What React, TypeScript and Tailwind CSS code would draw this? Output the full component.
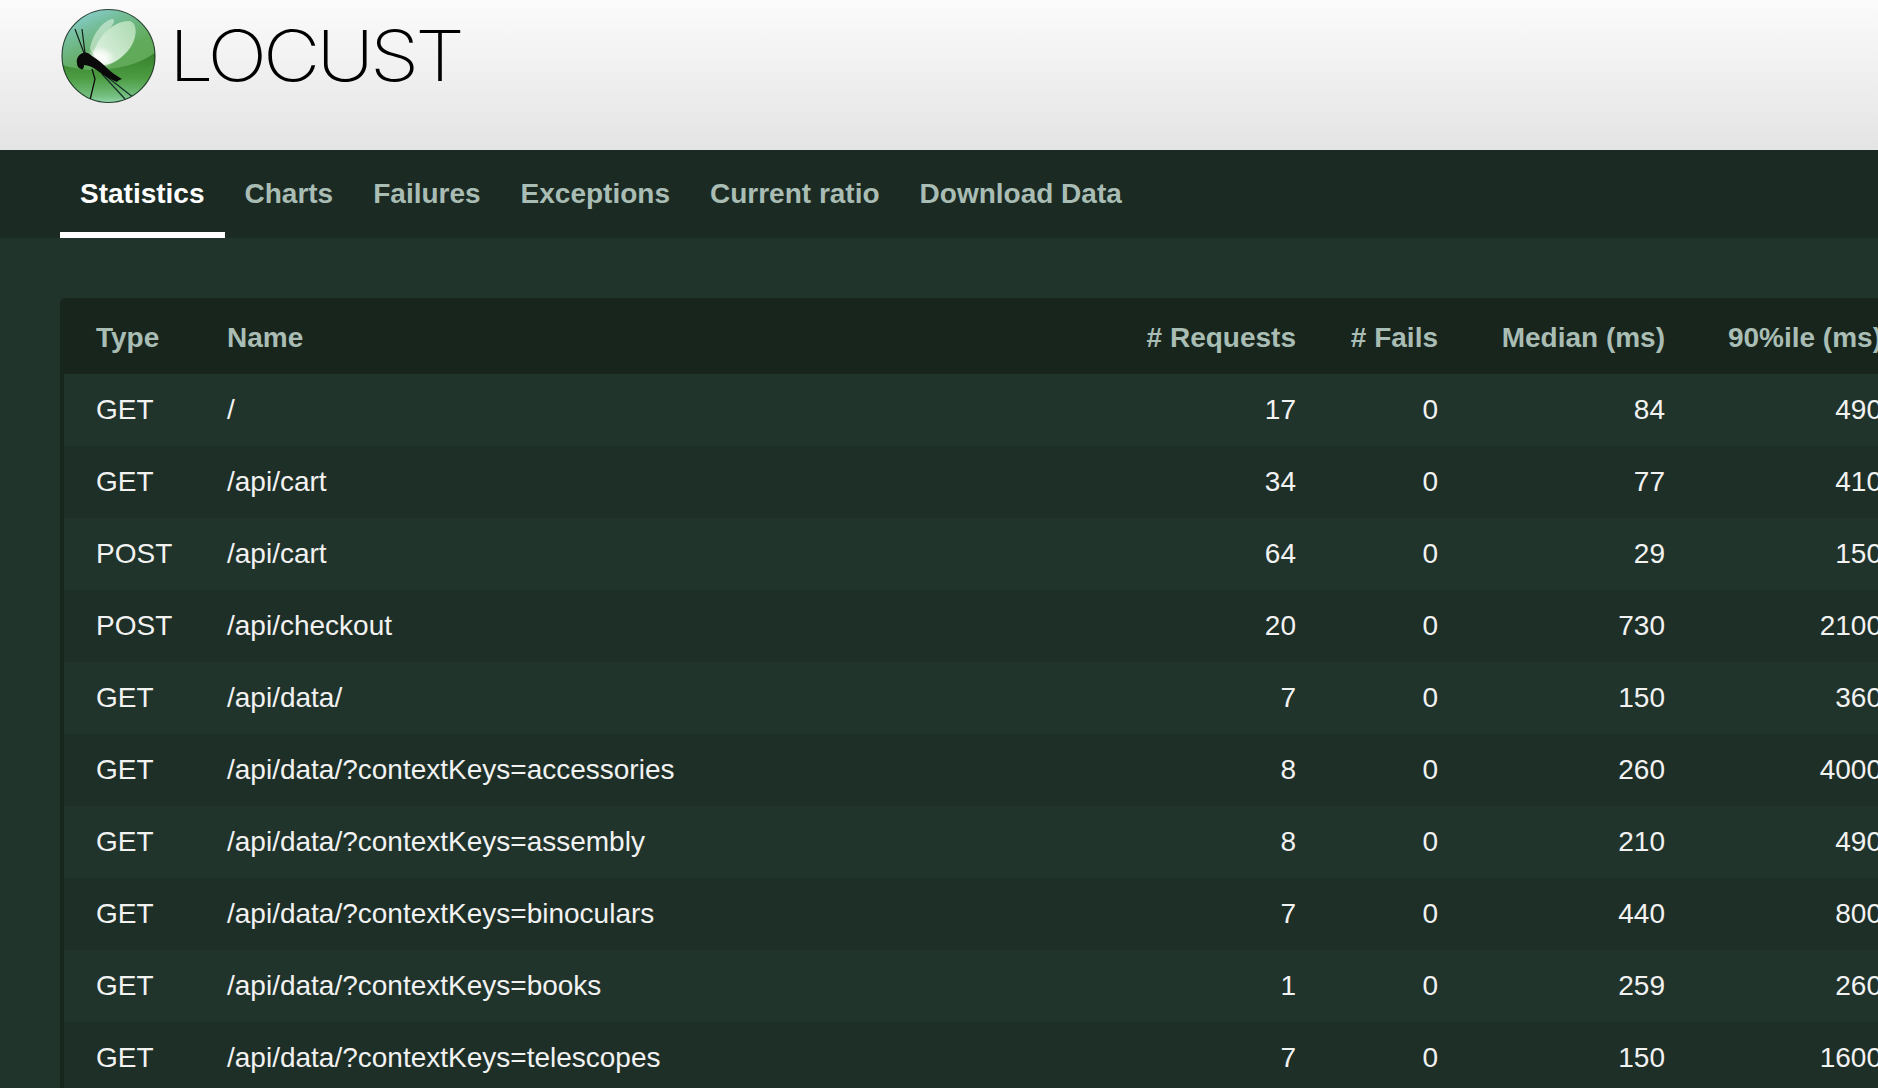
const tabs = ["Statistics", "Charts", "Failures", "Exceptions", "Current ratio", "Download Data"];
const rows: [string, string, string, string, string, string][] = [
  ["GET", "/", "17", "0", "84", "490"],
  ["GET", "/api/cart", "34", "0", "77", "410"],
  ["POST", "/api/cart", "64", "0", "29", "150"],
  ["POST", "/api/checkout", "20", "0", "730", "2100"],
  ["GET", "/api/data/", "7", "0", "150", "360"],
  ["GET", "/api/data/?contextKeys=accessories", "8", "0", "260", "4000"],
  ["GET", "/api/data/?contextKeys=assembly", "8", "0", "210", "490"],
  ["GET", "/api/data/?contextKeys=binoculars", "7", "0", "440", "800"],
  ["GET", "/api/data/?contextKeys=books", "1", "0", "259", "260"],
  ["GET", "/api/data/?contextKeys=telescopes", "7", "0", "150", "1600"],
];

function Logo() {
  return (
    <svg width="96" height="96" viewBox="0 0 96 96" className="shrink-0">
      <defs>
        <linearGradient id="top" x1="0.2" y1="0" x2="0.65" y2="1">
          <stop offset="0" stopColor="#8ccfd6" />
          <stop offset="0.22" stopColor="#74bd98" />
          <stop offset="0.5" stopColor="#62ab5e" />
          <stop offset="1" stopColor="#5aa64c" />
        </linearGradient>
        <linearGradient id="bot" x1="0" y1="0" x2="0" y2="1">
          <stop offset="0" stopColor="#357f2a" />
          <stop offset="0.5" stopColor="#4c9c42" />
          <stop offset="0.85" stopColor="#74bf80" />
          <stop offset="1" stopColor="#9adcb6" />
        </linearGradient>
        <linearGradient id="wing" x1="1" y1="0" x2="0" y2="1">
          <stop offset="0" stopColor="#b5e0b8" />
          <stop offset="0.7" stopColor="#e8f7ea" />
          <stop offset="1" stopColor="#ffffff" />
        </linearGradient>
        <radialGradient id="glow" cx="0.5" cy="0.5" r="0.5">
          <stop offset="0" stopColor="#ffffff" stopOpacity="1" />
          <stop offset="0.45" stopColor="#ffffff" stopOpacity="0.75" />
          <stop offset="1" stopColor="#ffffff" stopOpacity="0" />
        </radialGradient>
        <clipPath id="ball"><circle cx="48.5" cy="48" r="46.5" /></clipPath>
      </defs>
      <circle cx="48.5" cy="48" r="46.5" fill="url(#top)" />
      <g clipPath="url(#ball)">
        <path d="M0 56 C25 66 70 64 96 44 V96 H0 Z" fill="url(#bot)" />
        <path d="M33 46 C38 28 54 12 70 13 C78 16 77 30 70 40 C62 51 50 58 42 57 Z" fill="url(#wing)" opacity="0.85" />
        <path d="M30 41 C32 27 43 12 53 11 C57 13 50 20 43 28 C38 34 35 40 33 46 Z" fill="#dcf2e0" opacity="0.6" />
        <ellipse cx="40" cy="50" rx="15" ry="11" fill="url(#glow)" />
        <path d="M24 45 L15 21 M25 45 L22 21" stroke="#15201a" strokeWidth="1.2" fill="none" />
        <path d="M32 61 L35 71 L30 92" stroke="#0d0d0d" strokeWidth="1.3" fill="none" />
        <path d="M42 66 L65 91 M46 68 L74 90" stroke="#16302c" strokeWidth="1.2" fill="none" />
        <path d="M17 55 C16 50 19 46 24 44.5 C27 44 30 46 32 48 C37 51 42 55 47 60 C50 63 55 67 62 71 C60 72 58 72 57 74 C50 71 44 68 38 63 C33 59 28 57 24 57 C24 60 23 62 21 61 C18 60 17 58 17 55 Z" fill="#0a0a0a" />
      </g>
      <circle cx="48.5" cy="48" r="46.5" fill="none" stroke="#10281a" strokeOpacity="0.85" strokeWidth="1.1" />
    </svg>
  );
}

export default function App() {
  return (
    <div className="h-[1088px] w-full overflow-hidden bg-[#20342c] font-['Liberation_Sans',Arial,sans-serif] text-[28px]">
      <header className="flex h-[150px] items-start bg-gradient-to-b from-[#fbfbfb] to-[#e4e4e4] pl-[60px] pt-[8px]">
        <Logo />
        <span className="ml-[13px] mt-[6px] origin-left scale-x-[1.13] font-['Inter',sans-serif] text-[70px] font-[150] leading-[84px] tracking-[-3.5px] text-black">LOCUST</span>
      </header>
      <nav className="flex h-[88px] bg-[#1b2a23] pl-[60px]">
        {tabs.map((t, i) => (
          <div
            key={t}
            className={
              i === 0
                ? "flex h-full items-center border-b-[6px] border-white px-5 pt-[6px] font-bold text-white"
                : "flex h-full items-center px-5 pb-[6px] pt-[6px] font-bold text-[#a9bdb4]"
            }
          >
            {t}
          </div>
        ))}
      </nav>
      <main className="pl-[60px] pt-[60px]">
        <div className="w-[1900px] overflow-hidden rounded-[6px] border-l-[4px] border-[#17251d]">
          <table className="w-[1834px] table-fixed border-collapse">
            <thead>
              <tr className="h-[76px] bg-[#17251d] font-bold text-[#a9bdb4]">
                <th className="w-[147px] pl-8 pr-4 pt-[4px] text-left font-bold">Type</th>
                <th className="w-[909px] px-4 pt-[4px] text-left font-bold">Name</th>
                <th className="w-[192px] px-4 pt-[4px] text-right font-bold whitespace-nowrap"># Requests</th>
                <th className="w-[142px] px-4 pt-[4px] text-right font-bold whitespace-nowrap"># Fails</th>
                <th className="w-[227px] px-4 pt-[4px] text-right font-bold whitespace-nowrap">Median (ms)</th>
                <th className="w-[217px] px-4 pt-[4px] text-right font-bold whitespace-nowrap">90%ile (ms)</th>
              </tr>
            </thead>
            <tbody>
              {rows.map((r, i) => (
                <tr key={i} className={i % 2 === 0 ? "h-[72px] bg-[#20342c] text-[#f2f2f2]" : "h-[72px] bg-[#1e2f27] text-[#f2f2f2]"}>
                  <td className="pl-8 pr-4">{r[0]}</td>
                  <td className="px-4">{r[1]}</td>
                  <td className="px-4 text-right">{r[2]}</td>
                  <td className="px-4 text-right">{r[3]}</td>
                  <td className="px-4 text-right">{r[4]}</td>
                  <td className="px-4 text-right">{r[5]}</td>
                </tr>
              ))}
            </tbody>
          </table>
        </div>
      </main>
    </div>
  );
}
